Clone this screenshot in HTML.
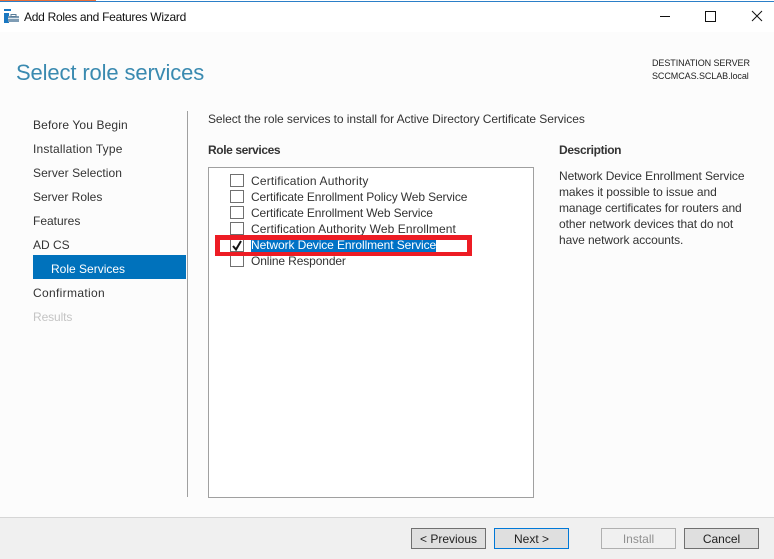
<!DOCTYPE html>
<html><head><meta charset="utf-8"><style>
html,body{margin:0;padding:0}
body{width:774px;height:558px;position:relative;overflow:hidden;background:#fcfcfc;font-family:"Liberation Sans",sans-serif;font-size:12px;color:#333}
.t{position:absolute;white-space:nowrap;line-height:16px}
.a{position:absolute}
.btn{position:absolute;top:528px;width:73px;height:19px;border:1px solid #707070;background:#dfdfdf;text-align:center;line-height:21px;color:#222}
.cb{position:absolute;left:230px;width:12px;height:11px;border:1px solid #707070;background:#fff}
</style></head><body>
<div class="a" style="left:0;top:0;width:774px;height:32px;background:#fff"></div>
<div class="a" style="left:0;top:1px;width:774px;height:1px;background:#2b7fc8"></div>
<div class="a" style="left:0;top:0;width:96px;height:1px;background:#e8703a"></div>
<svg class="a" style="left:4px;top:8px" width="15" height="16" viewBox="0 0 15 16"><rect x="0" y="1" width="7" height="2" fill="#1a78c2"/><rect x="0" y="5" width="5" height="10" fill="#1a78c2"/><rect x="4" y="8" width="11" height="6" fill="#7f9db5"/><rect x="7" y="6.5" width="5" height="2" fill="none" stroke="#5a7d99"/><rect x="4" y="10" width="11" height="1" fill="#dfe8ef"/></svg>
<div class="t" style="left:24px;top:9px;color:#111;letter-spacing:-.28px">Add Roles and Features Wizard</div>
<div class="a" style="left:660px;top:16px;width:10px;height:1px;background:#111"></div>
<div class="a" style="left:705px;top:11px;width:9px;height:9px;border:1px solid #111"></div>
<svg class="a" style="left:751px;top:10px" width="12" height="12" viewBox="0 0 12 12"><path d="M1 1L11 11M11 1L1 11" stroke="#111" fill="none"/></svg>
<div class="t" style="left:16px;top:59px;font-size:22px;line-height:28px;color:#3a8ab0;letter-spacing:-.13px">Select role services</div>
<div class="t" style="left:652px;top:57px;font-size:9px;line-height:13px;color:#222;letter-spacing:-.07px">DESTINATION SERVER<br>SCCMCAS.SCLAB.local</div>
<div class="t" style="left:33px;top:117px;letter-spacing:.13px">Before You Begin</div>
<div class="t" style="left:33px;top:141px;letter-spacing:.18px">Installation Type</div>
<div class="t" style="left:33px;top:165px;letter-spacing:.06px">Server Selection</div>
<div class="t" style="left:33px;top:189px">Server Roles</div>
<div class="t" style="left:33px;top:213px">Features</div>
<div class="t" style="left:33px;top:237px">AD CS</div>
<div class="a" style="left:33px;top:255px;width:153px;height:24px;background:#0072bc"></div>
<div class="t" style="left:51px;top:261px;color:#fff">Role Services</div>
<div class="t" style="left:33px;top:285px;letter-spacing:.33px">Confirmation</div>
<div class="t" style="left:33px;top:309px;color:#c4c4c4;letter-spacing:-.1px">Results</div>
<div class="a" style="left:187px;top:111px;width:1px;height:386px;background:#a0a0a0"></div>
<div class="t" style="left:208px;top:111px;letter-spacing:-.07px">Select the role services to install for Active Directory Certificate Services</div>
<div class="t" style="left:208px;top:142px;font-weight:bold;letter-spacing:-.4px">Role services</div>
<div class="t" style="left:559px;top:142px;font-weight:bold;letter-spacing:-.35px">Description</div>
<div class="a" style="left:208px;top:167px;width:324px;height:329px;border:1px solid #a0a0a0;background:#fff"></div>
<div class="cb" style="top:174px"></div><div class="t" style="left:251px;top:173px;letter-spacing:.18px">Certification Authority</div>
<div class="cb" style="top:190px"></div><div class="t" style="left:251px;top:189px;letter-spacing:-.12px">Certificate Enrollment Policy Web Service</div>
<div class="cb" style="top:206px"></div><div class="t" style="left:251px;top:205px;letter-spacing:-.12px">Certificate Enrollment Web Service</div>
<div class="cb" style="top:222px"></div><div class="t" style="left:251px;top:221px;letter-spacing:.08px">Certification Authority Web Enrollment</div>
<div class="cb" style="top:254px"></div><div class="t" style="left:251px;top:253px;letter-spacing:-.12px">Online Responder</div>
<div class="a" style="left:215px;top:235px;width:257px;height:21px;background:#ed1c24"></div>
<div class="a" style="left:220px;top:240px;width:247px;height:12px;background:#fff"></div>
<div class="a" style="left:230px;top:240px;width:12px;height:11px;border:1px solid #707070;border-top:none;background:#fff"></div>
<svg class="a" style="left:230px;top:239px" width="14" height="13" viewBox="0 0 14 13"><path d="M3 7L6 10.5L11 2" stroke="#111" stroke-width="2" fill="none"/></svg>
<div class="a" style="left:251px;top:240px;width:185px;height:12px;background:#0072c6"></div>
<div class="t" style="left:251px;top:237px;color:#fff;letter-spacing:-.09px">Network Device Enrollment Service</div>
<div class="t" style="left:559px;top:168px;letter-spacing:-.08px">Network Device Enrollment Service<br>makes it possible to issue and<br>manage certificates for routers and<br>other network devices that do not<br>have network accounts.</div>
<div class="a" style="left:0;top:517px;width:774px;height:41px;background:#f0f0f0;border-top:1px solid #d6d6d6"></div>
<div class="btn" style="left:411px">&lt; Previous</div>
<div class="btn" style="left:494px;border-color:#0078d7">Next &gt;</div>
<div class="btn" style="left:601px;border-color:#b0b0b0;background:#f0f0f0;color:#909090">Install</div>
<div class="btn" style="left:684px">Cancel</div>
</body></html>
